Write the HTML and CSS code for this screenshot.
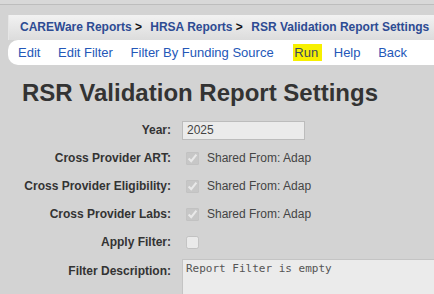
FILE: index.html
```html
<!DOCTYPE html>
<html lang="en">
<head>
    <meta charset="UTF-8">
    <meta name="viewport" content="width=device-width, initial-scale=1.0">
    <title>RSR Validation Report Settings</title>
    <link rel="stylesheet" href="styles.css">
</head>
<body>
    <div class="top-strip"></div>
    <div class="nav-wrap">
        <div class="breadcrumb">
            <a href="#" class="crumb">CAREWare Reports</a>
            <span class="sep">&gt;</span>
            <a href="#" class="crumb">HRSA Reports</a>
            <span class="sep">&gt;</span>
            <a href="#" class="crumb">RSR Validation Report Settings</a>
        </div>
        <div class="menu">
            <a href="#" class="menu-item">Edit</a>
            <a href="#" class="menu-item">Edit Filter</a>
            <a href="#" class="menu-item">Filter By Funding Source</a>
            <a href="#" class="menu-item menu-run">Run</a>
            <a href="#" class="menu-item">Help</a>
            <a href="#" class="menu-item">Back</a>
        </div>
    </div>

    <h1 class="page-title">RSR Validation Report Settings</h1>

    <div class="settings">
        <div class="row">
            <label class="row-label">Year:</label>
            <input type="text" class="text-input" value="2025" disabled>
        </div>
        <div class="row">
            <label class="row-label">Cross Provider ART:</label>
            <div class="check-group">
                <input type="checkbox" class="check" checked disabled>
                <span class="shared">Shared From: Adap</span>
            </div>
        </div>
        <div class="row">
            <label class="row-label">Cross Provider Eligibility:</label>
            <div class="check-group">
                <input type="checkbox" class="check" checked disabled>
                <span class="shared">Shared From: Adap</span>
            </div>
        </div>
        <div class="row">
            <label class="row-label">Cross Provider Labs:</label>
            <div class="check-group">
                <input type="checkbox" class="check" checked disabled>
                <span class="shared">Shared From: Adap</span>
            </div>
        </div>
        <div class="row">
            <label class="row-label">Apply Filter:</label>
            <div class="check-group">
                <input type="checkbox" class="check" disabled>
            </div>
        </div>
        <div class="row row-top">
            <label class="row-label">Filter Description:</label>
            <textarea class="text-area" disabled>Report Filter is empty</textarea>
        </div>
    </div>
</body>
</html>
```

FILE: styles.css
```css
body {
    font-family: 'Liberation Sans', Arial, sans-serif;
    background-color: #d3d3d3;
    margin: 0;
    overflow: hidden;
}

.top-strip {
    height: 4px;
    background-color: #d8d8d8;
    border-bottom: 1px solid #bdbdbd;
}

.nav-wrap {
    margin: 10px 0 0 8px;
}

.breadcrumb {
    height: 25px;
    line-height: 24px;
    padding-left: 11px;
    background: linear-gradient(#f2f2f2, #dcdcdc);
    border-left: 1px solid #e6e6e6;
    font-size: 12px;
    font-weight: bold;
    white-space: nowrap;
}

.crumb {
    color: #2d4b93;
    text-decoration: none;
}

.sep {
    color: #111;
    margin-right: 5px;
}

.menu {
    height: 25px;
    line-height: 25px;
    background-color: #ffffff;
    border-radius: 10px 0 0 10px;
    padding-left: 10px;
    font-size: 13px;
    white-space: nowrap;
}

.menu-item {
    color: #2457b8;
    text-decoration: none;
    margin-right: 14px;
}

.menu-run {
    background-color: #f7f000;
    padding: 1px 4px 1px 1px;
    margin-left: 2px;
    margin-right: 8px;
    color: #3a4a60;
}

.page-title {
    color: #333333;
    font-size: 24px;
    font-weight: bold;
    margin: 14px 0 9px 22px;
}

.settings {
    display: flex;
    flex-direction: column;
}

.row {
    display: grid;
    grid-template-columns: 171px 1fr;
    column-gap: 11px;
    align-items: center;
    height: 28px;
}

.row-top {
    align-items: start;
    height: auto;
    padding-top: 3px;
}

.row-label {
    text-align: right;
    font-size: 12px;
    font-weight: bold;
    color: #333333;
}

.row-top .row-label {
    padding-top: 5px;
}

.text-input {
    width: 123px;
    height: 19px;
    box-sizing: border-box;
    background-color: #ebebeb;
    border: 1px solid #bcbcbc;
    padding: 0 4px;
    font-family: 'Liberation Sans', Arial, sans-serif;
    font-size: 12px;
    color: #444444;
}

.check-group {
    display: flex;
    align-items: center;
    gap: 8px;
    padding-left: 4px;
}

.check {
    width: 13px;
    height: 13px;
    margin: 0;
}

.shared {
    font-size: 12px;
    color: #444444;
}

.text-area {
    width: 280px;
    height: 50px;
    box-sizing: border-box;
    background-color: #ebebeb;
    border: 1px solid #c4c4c4;
    padding: 2px 3px;
    resize: none;
    font-family: 'DejaVu Sans Mono', monospace;
    font-size: 11px;
    color: #555555;
}
```
